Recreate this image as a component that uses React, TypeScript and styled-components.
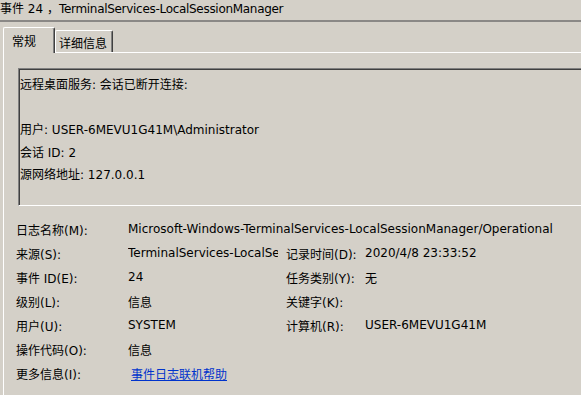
import React from 'react';
import styled, { createGlobalStyle } from 'styled-components';

const GlobalStyle = createGlobalStyle`
  html, body {
    margin: 0;
    padding: 0;
    background: #d4d0c8;
    overflow: hidden;
  }
  body {
    font-family: "DejaVu Sans", "Noto Sans CJK SC", sans-serif;
    font-size: 12px;
    color: #000;
  }
`;

const Window = styled.div`
  width: 581px;
  height: 395px;
  overflow: hidden;
  display: flex;
  flex-direction: column;
`;

const TitleBar = styled.div`
  height: 20px;
  line-height: 18px;
  white-space: nowrap;
  border-bottom: 2px solid #8a8886;
`;

const TitleSource = styled.span`
  letter-spacing: -0.3px;
`;

const TabStrip = styled.div`
  display: flex;
  align-items: flex-end;
  height: 30px;
  padding-left: 3px;
`;

const Tab = styled.div<{ $active?: boolean }>`
  box-sizing: border-box;
  height: ${p => (p.$active ? '26px' : '22px')};
  margin-bottom: ${p => (p.$active ? '-1px' : '0')};
  position: relative;
  z-index: ${p => (p.$active ? 1 : 0)};
  padding: ${p => (p.$active ? '0 0 0 8px' : '2px 0 0 3px')};
  width: ${p => (p.$active ? '52px' : '58px')};
  display: flex;
  align-items: center;
  background: #d4d0c8;
  border-top: 1px solid #fff;
  border-left: 1px solid #fff;
  border-right: 1px solid #404040;
  box-shadow: inset -1px 0 0 #808080;
  border-top-left-radius: 2px;
  border-top-right-radius: 2px;
  white-space: nowrap;
`;

const Panel = styled.div`
  flex: 1;
  margin-left: 3px;
  margin-right: -20px;
  border-top: 1px solid #fff;
  border-left: 1px solid #fff;
  padding: 15px 0 0 12px;
  display: flex;
  flex-direction: column;
`;

const MessageBox = styled.div`
  box-sizing: border-box;
  height: 138px;
  margin-left: 2px;
  padding: 5px 0 0 1px;
  border-top: 1px solid #808080;
  border-left: 1px solid #808080;
  border-bottom: 1px solid #fff;
  border-right: 1px solid #fff;
  box-shadow: inset 1px 1px 0 #404040;
  line-height: 22.5px;
  white-space: nowrap;
`;

const MessageLine = styled.div`
  height: 22.5px;
`;

const Fields = styled.div`
  margin-top: 11px;
  display: grid;
  grid-template-columns: 104px 150px 71px 1fr;
  column-gap: 8px;
  grid-auto-rows: 24px;
  align-items: center;
  white-space: nowrap;
`;

const Label = styled.div``;

const Value = styled.div<{ $span?: number }>`
  grid-column: span ${p => p.$span ?? 1};
  overflow: hidden;
`;

const HelpLink = styled.a`
  margin-left: 3px;
  color: #0033cc;
  text-decoration: underline;
  cursor: pointer;
`;

const messageLines = [
  '远程桌面服务: 会话已断开连接:',
  '',
  '用户: USER-6MEVU1G41M\\Administrator',
  '会话 ID: 2',
  '源网络地址: 127.0.0.1',
];

export default function App() {
  return (
    <Window>
      <GlobalStyle />
      <TitleBar>
        事件 24 ，<TitleSource>TerminalServices-LocalSessionManager</TitleSource>
      </TitleBar>
      <TabStrip>
        <Tab $active>常规</Tab>
        <Tab>详细信息</Tab>
      </TabStrip>
      <Panel>
        <MessageBox>
          {messageLines.map((l, i) => (
            <MessageLine key={i}>{l}</MessageLine>
          ))}
        </MessageBox>
        <Fields>
          <Label>日志名称(M):</Label>
          <Value $span={3}>Microsoft-Windows-TerminalServices-LocalSessionManager/Operational</Value>

          <Label>来源(S):</Label>
          <Value>TerminalServices-LocalSessionManager</Value>
          <Label>记录时间(D):</Label>
          <Value>2020/4/8 23:33:52</Value>

          <Label>事件 ID(E):</Label>
          <Value>24</Value>
          <Label>任务类别(Y):</Label>
          <Value>无</Value>

          <Label>级别(L):</Label>
          <Value>信息</Value>
          <Label>关键字(K):</Label>
          <Value></Value>

          <Label>用户(U):</Label>
          <Value>SYSTEM</Value>
          <Label>计算机(R):</Label>
          <Value>USER-6MEVU1G41M</Value>

          <Label>操作代码(O):</Label>
          <Value $span={3}>信息</Value>

          <Label>更多信息(I):</Label>
          <Value $span={3}>
            <HelpLink>事件日志联机帮助</HelpLink>
          </Value>
        </Fields>
      </Panel>
    </Window>
  );
}
